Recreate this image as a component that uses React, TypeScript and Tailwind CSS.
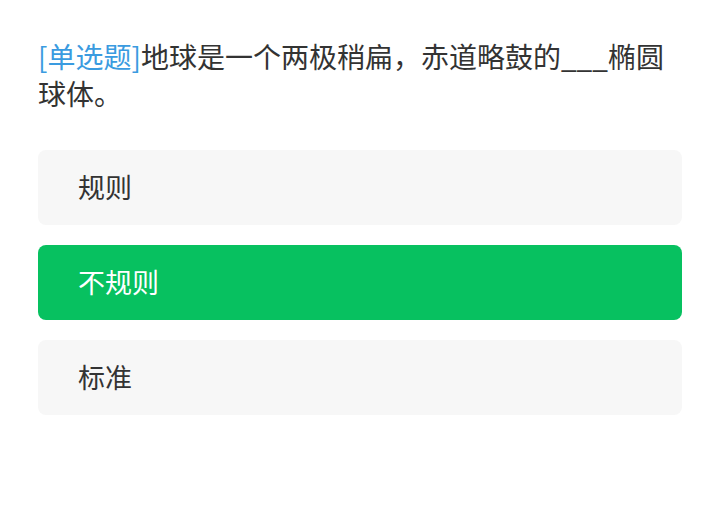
const options = ["规则", "不规则", "标准"];
const selected = 1;

export default function App() {
  return (
    <div className="w-[720px] h-[510px] bg-white px-[38px] pt-[38px] font-['Noto_Sans_CJK_SC',sans-serif]">
      <p className="text-[28px] leading-[37px] text-[#333333]">
        <span className="text-[#3a9be0]">[单选题]</span>
        地球是一个两极稍扁，赤道略鼓的___椭圆球体。
      </p>
      <div className="mt-[38px] flex flex-col gap-[20px]">
        {options.map((opt, i) => (
          <div
            key={opt}
            className={
              i === selected
                ? "h-[75px] rounded-[8px] bg-[#07c160] px-[40px] flex items-center text-[27px] text-white"
                : "h-[75px] rounded-[8px] bg-[#f7f7f7] px-[40px] flex items-center text-[27px] text-[#333333]"
            }
          >
            {opt}
          </div>
        ))}
      </div>
    </div>
  );
}
